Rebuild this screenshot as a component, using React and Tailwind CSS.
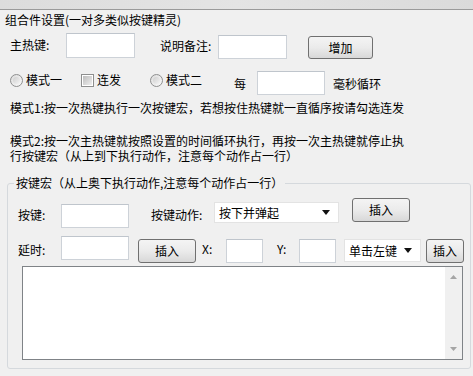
import React from "react";

const font = { fontFamily: '"Noto Sans CJK SC", "Liberation Sans", sans-serif' };

function Btn({ children, className = "" }) {
  return (
    <button
      className={
        "flex items-center justify-center rounded-[3px] border border-[#707070] bg-linear-to-b from-[#f4f4f4] via-[#ebebeb] to-[#d8d8d8] text-[12px] leading-none text-black " +
        className
      }
    >
      {children}
    </button>
  );
}

function Field({ className = "" }) {
  return <div className={"border border-[#cdd2d8] border-t-[#bfc5cc] bg-white " + className} />;
}

function Radio() {
  return (
    <span className="flex h-[13px] w-[13px] items-center justify-center rounded-full border border-[#8e8f8f] bg-linear-to-br from-[#dcdcdc] to-[#fafafa]">
      <span className="h-[7px] w-[7px] rounded-full bg-linear-to-br from-[#cfcfcf] to-[#f4f4f4]" />
    </span>
  );
}

function Check() {
  return (
    <span className="flex h-[13px] w-[13px] items-center justify-center border border-[#8e8f8f] bg-white">
      <span className="h-[9px] w-[9px] bg-linear-to-br from-[#bdbdbd] to-[#efefef]" />
    </span>
  );
}

function Select({ label, className = "" }) {
  return (
    <div className={"flex items-center justify-between border border-[#e3e3e3] bg-white pl-[4px] pr-[8px] text-[12px] " + className}>
      <span>{label}</span>
      <svg width="8" height="5" viewBox="0 0 8 5">
        <path d="M0 0h8L4 5z" fill="#111" />
      </svg>
    </div>
  );
}

export default function App() {
  return (
    <div className="flex h-[376px] w-[473px] flex-col overflow-hidden bg-[#f0f0f0] text-[12px] leading-[14px] text-black" style={font}>
      {/* top edge */}
      <div className="h-[9px] bg-linear-to-r from-[#dcdcdc] via-[#e4e4e4] to-[#dadada]" />
      <div className="h-px bg-[#9a9a9a]" />

      <div className="mt-[3px] pl-[5px]">组合件设置(一对多类似按键精灵)</div>

      {/* hotkey row */}
      <div className="mt-[6px] flex h-[26px] items-start pl-[10px]">
        <span className="mt-[5px] w-[56px]">主热键:</span>
        <Field className="h-[25px] w-[69px]" />
        <span className="ml-[25px] mt-[6px] w-[58px]">说明备注:</span>
        <Field className="mt-[2px] h-[24px] w-[69px]" />
        <Btn className="ml-[21px] mt-[3px] h-[23px] w-[65px]">增加</Btn>
      </div>

      {/* mode row */}
      <div className="mt-[12px] flex h-[24px] items-start pl-[10px]">
        <div className="mt-[2px] flex items-center">
          <Radio />
          <span className="ml-[3px]">模式一</span>
          <span className="ml-[19px]"><Check /></span>
          <span className="ml-[3px]">连发</span>
          <span className="ml-[29px]"><Radio /></span>
          <span className="ml-[3px]">模式二</span>
        </div>
        <span className="ml-[32px] mt-[6px]">每</span>
        <Field className="ml-[11px] h-[24px] w-[68px]" />
        <span className="ml-[8px] mt-[6px]">毫秒循环</span>
      </div>

      <div className="mt-[6px] pl-[10px]">模式1:按一次热键执行一次按键宏，若想按住热键就一直循序按请勾选连发</div>

      <div className="mt-[18px] pl-[10px] leading-[15px]">
        模式2:按一次主热键就按照设置的时间循环执行，再按一次主热键就停止执
        <br />
        行按键宏（从上到下执行动作，注意每个动作占一行）
      </div>

      {/* macro group */}
      <fieldset className="ml-[7px] mt-[13px] w-[464px] rounded-[3px] border border-[#d5d9dd] pb-[8px]">
        <legend className="ml-[6px] px-[2px] leading-[14px]">按键宏（从上奥下执行动作,注意每个动作占一行）</legend>

        <div className="mt-[8px] flex h-[30px] items-start pl-[10px]">
          <span className="mt-[10px] w-[43px]">按键:</span>
          <Field className="mt-[6px] h-[24px] w-[68px]" />
          <span className="ml-[22px] mt-[10px] w-[63px]">按键动作:</span>
          <Select label="按下并弹起" className="mt-[4px] h-[21px] w-[125px]" />
          <Btn className="ml-[13px] h-[24px] w-[58px]">插入</Btn>
        </div>

        <div className="mt-[8px] flex h-[27px] items-start pl-[10px]">
          <span className="mt-[7px] w-[43px]">延时:</span>
          <Field className="h-[24px] w-[68px]" />
          <Btn className="ml-[9px] mt-[3px] h-[24px] w-[58px]">插入</Btn>
          <span className="ml-[6px] mt-[6px] w-[24px]">X:</span>
          <Field className="mt-[3px] h-[24px] w-[37px]" />
          <span className="ml-[14px] mt-[6px] w-[22px]">Y:</span>
          <Field className="mt-[3px] h-[24px] w-[37px]" />
          <Select label="单击左键" className="ml-[8px] mt-[3px] h-[23px] w-[77px]" />
          <Btn className="ml-[5px] mt-[3px] h-[24px] w-[38px]">插入</Btn>
        </div>

        <div className="ml-[14px] mt-[3px] flex h-[94px] w-[441px] border border-[#7f8387] bg-white">
          <div className="flex-1" />
          <div className="flex w-[17px] flex-col items-center justify-between bg-[#f0f0f0] py-[8px]">
            <svg width="7" height="4" viewBox="0 0 7 4">
              <path d="M3.5 0L7 4H0z" fill="#a5a5a5" />
            </svg>
            <svg width="7" height="4" viewBox="0 0 7 4">
              <path d="M0 0h7L3.5 4z" fill="#a5a5a5" />
            </svg>
          </div>
        </div>
      </fieldset>
    </div>
  );
}
